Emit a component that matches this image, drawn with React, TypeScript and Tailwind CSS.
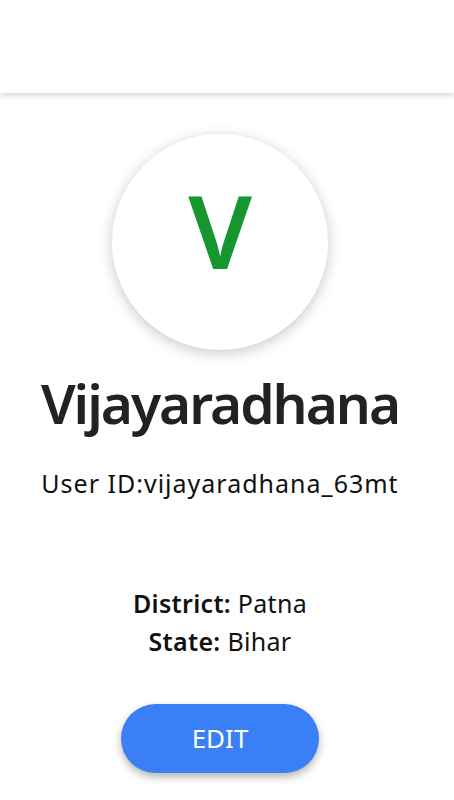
const App = () => {
    const user = {
        name: "Vijayaradhana",
        userId: "vijayaradhana_63mt",
        district: "Patna",
        state: "Bihar",
    };

    return (
        <div className="min-h-[800px] bg-white font-['Noto_Sans',sans-serif] text-[#222]">
            {/* top bar */}
            <div className="h-[93px] bg-white shadow-[0_2px_6px_rgba(0,0,0,0.18)]" />

            <div className="flex flex-col items-center pr-[14px]">
                <div className="mt-[41px] flex h-[216px] w-[216px] items-center justify-center rounded-full bg-white shadow-[0_3px_14px_rgba(0,0,0,0.22)]">
                    <span className="mb-[24px] text-[101px] font-semibold leading-none text-[#15962f]">
                        {user.name.charAt(0)}
                    </span>
                </div>

                <h1 className="mt-[15px] text-[55px] font-semibold leading-[76px] tracking-[-2px] text-[#222]">
                    {user.name}
                </h1>

                <p className="mt-[25px] text-[25px] leading-[34px] tracking-[1px] text-[#111]">
                    User ID:{user.userId}
                </p>

                <div className="mt-[84px] flex flex-col items-center text-[25px] leading-[38px] tracking-[0.3px] text-[#111]">
                    <p>
                        <span className="font-semibold">District:</span> {user.district}
                    </p>
                    <p>
                        <span className="font-semibold">State:</span> {user.state}
                    </p>
                </div>

                <button className="mt-[44px] flex h-[69px] w-[198px] items-center justify-center rounded-full bg-[#3a7ff6] text-[26px] text-white shadow-[0_4px_8px_rgba(0,0,0,0.3)]">
                    EDIT
                </button>
            </div>
        </div>
    );
};

export default App;
